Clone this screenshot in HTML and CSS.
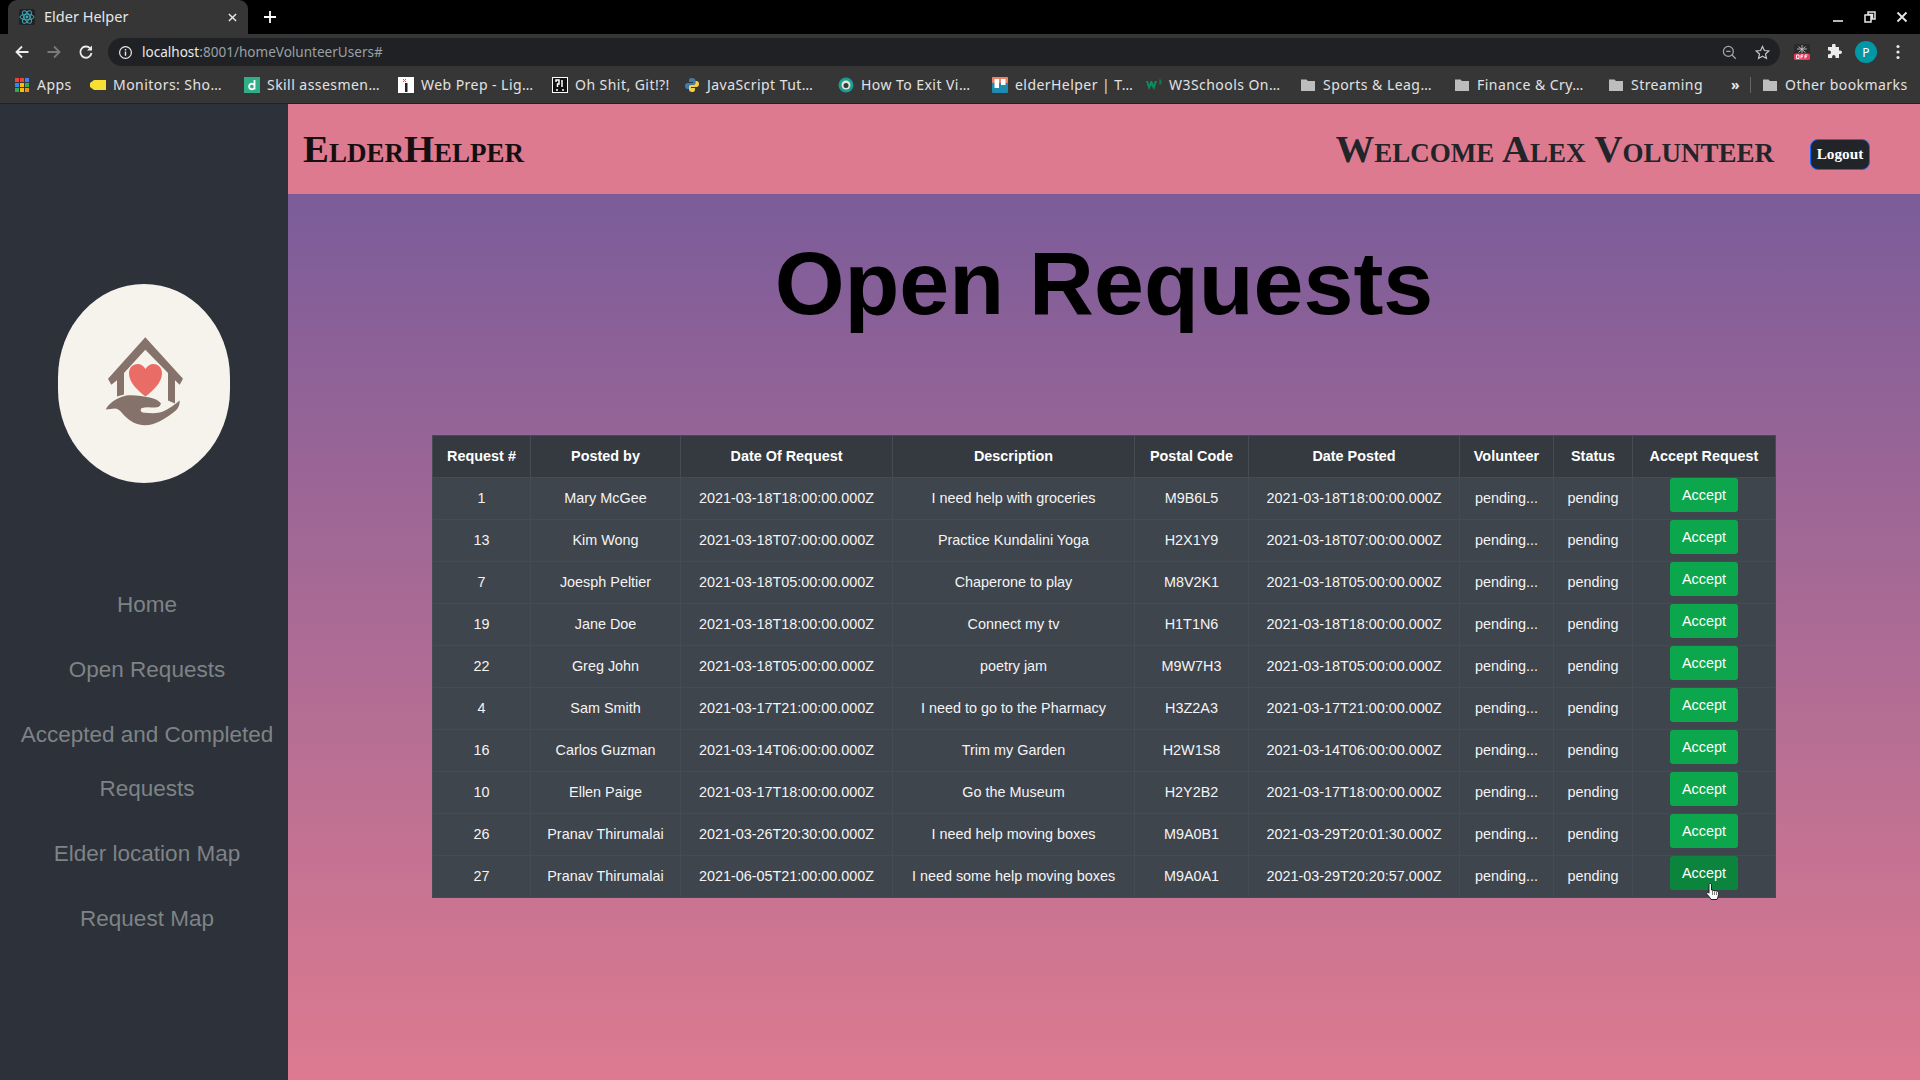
FILE: index.html
```html
<!DOCTYPE html>
<html lang="en">
<head>
<meta charset="utf-8">
<title>Elder Helper</title>
<link rel="stylesheet" href="styles.css">
</head>
<body>
<div class="chrome">
  <div class="tabstrip">
    <div class="tab">
      <svg class="favicon" viewBox="0 0 16 16"><rect width="16" height="16" rx="2" fill="#222"/><g fill="none" stroke="#3fa7b8" stroke-width="1"><ellipse cx="8" cy="8" rx="7" ry="2.8"/><ellipse cx="8" cy="8" rx="7" ry="2.8" transform="rotate(60 8 8)"/><ellipse cx="8" cy="8" rx="7" ry="2.8" transform="rotate(120 8 8)"/></g><circle cx="8" cy="8" r="1.4" fill="#3fa7b8"/></svg>
      <span class="tab-title">Elder Helper</span>
      <svg class="tab-close" viewBox="0 0 10 10"><path d="M1 1l8 8M9 1l-8 8" stroke="#e8e8e8" stroke-width="1.6"/></svg>
    </div>
    <svg class="newtab" viewBox="0 0 12 12"><path d="M6 0v12M0 6h12" stroke="#fff" stroke-width="1.8"/></svg>
    <div class="winctl">
      <svg viewBox="0 0 12 12"><path d="M1 10h10" stroke="#e8e8e8" stroke-width="1.6"/></svg>
      <svg viewBox="0 0 12 12"><path d="M4 1h7v7H8.500V3.500H4zM1 4h6v7H1z" fill="none" stroke="#e8e8e8" stroke-width="1.500"/></svg>
      <svg viewBox="0 0 12 12"><path d="M1.500 1.500l9 9M10.500 1.500l-9 9" stroke="#e8e8e8" stroke-width="1.800"/></svg>
    </div>
  </div>
  <div class="toolbar">
    <svg class="nav-ic" viewBox="0 0 16 16"><path d="M14.500 8H2.500M8 2.500L2.500 8 8 13.500" fill="none" stroke="#ececec" stroke-width="1.800"/></svg>
    <svg class="nav-ic" viewBox="0 0 16 16"><path d="M1.500 8h12M8 2.500L13.500 8 8 13.500" fill="none" stroke="#7a7a7a" stroke-width="1.800"/></svg>
    <svg class="nav-ic" viewBox="0 0 16 16"><path d="M13.500 9a5.600 5.600 0 1 1-1.500-4.800" fill="none" stroke="#ececec" stroke-width="1.800"/><path d="M14 1.500v5h-5z" fill="#ececec"/></svg>
    <div class="omnibox">
      <svg class="info" viewBox="0 0 16 16"><circle cx="8" cy="8" r="6.300" fill="none" stroke="#e8e8e8" stroke-width="1.300"/><path d="M8 7v4.500M8 4.300v1.500" stroke="#e8e8e8" stroke-width="1.500"/></svg>
      <span class="url"><span class="host">localhost</span>:8001/homeVolunteerUsers#</span>
      <svg class="omni-ic zoom-ic" viewBox="0 0 16 16"><circle cx="6.800" cy="6.800" r="5.300" fill="none" stroke="#a8a8a8" stroke-width="1.300"/><path d="M4.500 6.800h4.600M10.700 10.700l4 4" stroke="#a8a8a8" stroke-width="1.300"/></svg>
      <svg class="omni-ic" viewBox="0 0 16 16"><path d="M8 1.500l2 4.400 4.700.5-3.500 3.200 1 4.700L8 11.900l-4.200 2.400 1-4.700L1.300 6.400 6 5.900z" fill="none" stroke="#c4c4c4" stroke-width="1.300"/></svg>
    </div>
    <svg class="ext" viewBox="0 0 16 16"><rect width="16" height="16" rx="2" fill="#2a2a2a"/><g stroke="#cfcfcf" stroke-width=".8"><path d="M8 1v8M3 5h10M4.500 2.500l7 6M11.500 2.500l-7 6"/></g><rect y="9.500" width="16" height="6.500" rx="1.500" fill="#f0395e"/><path d="M2.500 11h2.500v3.500H2.500zM7 14.500V11h2.300M7 12.700h2M11 14.500V11h2.500M11 12.700h2" fill="none" stroke="#fff" stroke-width=".9"/></svg>
    <svg class="puzzle" viewBox="0 0 16 16"><path d="M6 1.500a1.800 1.800 0 0 1 3.600 0V3H13v3.500h1.200a1.800 1.800 0 0 1 0 3.600H13V14H9.500v-1.200a1.700 1.700 0 0 0-3.400 0V14H2v-3.800h1.200a1.800 1.800 0 0 0 0-3.600H2V3h4z" fill="#ececec"/></svg>
    <span class="avatar">P</span>
    <svg class="kebab" viewBox="0 0 4 16"><circle cx="2" cy="2.500" r="1.600" fill="#e8e8e8"/><circle cx="2" cy="8" r="1.600" fill="#e8e8e8"/><circle cx="2" cy="13.500" r="1.600" fill="#e8e8e8"/></svg>
  </div>
  <div class="bookmarks">
    <span class="bm bm-apps">
      <svg class="bm-ic" viewBox="0 0 16 16"><g><rect x="1" y="1" width="4" height="4" fill="#e8453c"/><rect x="6" y="1" width="4" height="4" fill="#e8453c"/><rect x="11" y="1" width="4" height="4" fill="#3b82f6"/><rect x="1" y="6" width="4" height="4" fill="#3b82f6"/><rect x="6" y="6" width="4" height="4" fill="#fbbc05"/><rect x="11" y="6" width="4" height="4" fill="#34a853"/><rect x="1" y="11" width="4" height="4" fill="#34a853"/><rect x="6" y="11" width="4" height="4" fill="#fbbc05"/><rect x="11" y="11" width="4" height="4" fill="#f28b20"/></g></svg>
      <span class="bm-text">Apps</span>
    </span>
    <span class="bm">
      <svg class="bm-ic" viewBox="0 0 16 16"><path d="M0 6l4-3h12v10H4L0 10z" fill="#f7df33"/></svg>
      <span class="bm-text">Monitors: Sho…</span>
    </span>
    <span class="bm">
      <svg class="bm-ic" viewBox="0 0 16 16"><rect width="16" height="16" fill="#2fae87"/><path d="M10.500 3v9.500M10.500 8.500a2.800 2.800 0 1 0 0 2" fill="none" stroke="#fff" stroke-width="1.800"/></svg>
      <span class="bm-text">Skill assesmen…</span>
    </span>
    <span class="bm">
      <svg class="bm-ic" viewBox="0 0 16 16"><rect width="16" height="16" fill="#fff"/><path d="M5 2l3 3M8 2L5 5" stroke="#e05050"/><rect x="7" y="6" width="2.500" height="9" fill="#223"/></svg>
      <span class="bm-text">Web Prep - Lig…</span>
    </span>
    <span class="bm bm-short">
      <svg class="bm-ic" viewBox="0 0 16 16"><rect width="16" height="16" fill="#fff"/><rect x="1" y="1" width="14" height="14" fill="#111"/><path d="M4 5V3h3v4H5.500v3M10 3v7M4 13h2M10 13h2" stroke="#fff" stroke-width="1.500" fill="none"/></svg>
      <span class="bm-text">Oh Shit, Git!?!</span>
    </span>
    <span class="bm">
      <svg class="bm-ic" viewBox="0 0 16 16"><path d="M8 1C5 1 5 2.500 5 4v1h4v1H3.500C2 6 1 7 1 9s1 3 2.500 3H5v-2c0-1.200 1-2 2-2h3c1 0 1.500-.8 1.500-1.500V3.500C11.500 2 10 1 8 1z" fill="#3f7cac"/><path d="M8 15c3 0 3-1.500 3-3v-1H7v-1h5.500C14 10 15 9 15 7s-1-3-2.500-3H11.500v2c0 1.200-1 2-2 2H6.500c-1 0-1.500.8-1.500 1.500v3C5 14 6 15 8 15z" fill="#f5cf47"/></svg>
      <span class="bm-text">JavaScript Tut…</span>
    </span>
    <span class="bm">
      <svg class="bm-ic" viewBox="0 0 16 16"><circle cx="8" cy="8" r="7.500" fill="#1a9c98"/><circle cx="8" cy="8" r="4.500" fill="#e8e6c8"/><circle cx="8" cy="8.500" r="2.500" fill="#2d3a4a"/></svg>
      <span class="bm-text">How To Exit Vi…</span>
    </span>
    <span class="bm">
      <svg class="bm-ic" viewBox="0 0 16 16"><rect width="16" height="16" rx="1" fill="#1f8bb0"/><rect width="16" height="6" rx="1" fill="#e9826a"/><rect x="2.500" y="2" width="4.500" height="9" fill="#fff"/><rect x="9" y="2" width="4.500" height="6" fill="#fff"/></svg>
      <span class="bm-text">elderHelper | T…</span>
    </span>
    <span class="bm">
      <svg class="bm-ic" viewBox="0 0 16 16"><path d="M0 4l3 9 2.200-5 2.800 5 3-9H8.500L8 8 6 4H4.500L3 8 2.200 4z" fill="#0a8f5b"/><path d="M13 3h2M15 3v2h-2M13 5h2v2h-2" fill="none" stroke="#0a8f5b" stroke-width=".7"/></svg>
      <span class="bm-text">W3Schools On…</span>
    </span>
    <span class="bm">
      <svg class="bm-ic" viewBox="0 0 16 16"><path d="M1 2.500h5.500L8 4h7v10H1z" fill="#bdbdbd"/></svg>
      <span class="bm-text">Sports &amp; Leag…</span>
    </span>
    <span class="bm">
      <svg class="bm-ic" viewBox="0 0 16 16"><path d="M1 2.500h5.500L8 4h7v10H1z" fill="#bdbdbd"/></svg>
      <span class="bm-text">Finance &amp; Cry…</span>
    </span>
    <span class="bm bm-stream">
      <svg class="bm-ic" viewBox="0 0 16 16"><path d="M1 2.500h5.500L8 4h7v10H1z" fill="#bdbdbd"/></svg>
      <span class="bm-text">Streaming</span>
    </span>
    <span class="bm-more">»</span>
    <span class="bm-sep"></span>
    <span class="bm bm-other">
      <svg class="bm-ic" viewBox="0 0 16 16"><path d="M1 2.500h5.500L8 4h7v10H1z" fill="#bdbdbd"/></svg>
      <span class="bm-text">Other bookmarks</span>
    </span>
  </div>
</div>

<div class="app">
  <aside class="sidebar">
    <div class="logo">
      <svg class="logo-art" viewBox="0 -1.500 172 198">
        <path d="M87.300 51.700L125 93.300l-3.300 6-4.700-4.500V118l-7-3V87.500L87.300 64.300 66 87.500V109l-7 2V94.800l-5.700 4.500-3.300-6z" fill="#85736b"/>
        <path d="M87.500 111C80 105 71 97 71 88c0-6 4-9.500 8.500-9.500 3.500 0 6.500 2 8 5 1.500-3 4.500-5 8-5 4.500 0 8.500 3.500 8.500 9.500 0 9-9 17-16.500 23z" fill="#e96c66"/>
        <path d="M47.700 124c3-6 11-12 20.600-14 9-1 16 1 23.400 2 5 1 9.300 3 11.300 6-1 3-3 4-6 4-4.500 0-9-1-13.700.7-1.500 2.500 0 4.300 3.400 4.600 6 .4 13.300 1 18.300-1.300 6-2.500 12-7 16.700-11 .3 6-3 10-7.700 13-8 6-17 11.700-27 11.700-8 0-15-4-20-9-4-4-6-7.700-10-7.700z" fill="#85736b"/>
      </svg>
    </div>
    <nav class="side-nav">
      <a class="side-link" href="#">Home</a>
      <a class="side-link" href="#">Open Requests</a>
      <a class="side-link" href="#">Accepted and Completed Requests</a>
      <a class="side-link" href="#">Elder location Map</a>
      <a class="side-link" href="#">Request Map</a>
    </nav>
  </aside>
  <div class="content">
    <header class="topbar">
      <span class="brand">ElderHelper</span>
      <div class="topbar-right">
        <span class="welcome">Welcome Alex Volunteer</span>
        <button class="logout">Logout</button>
      </div>
    </header>
    <main class="main">
      <h1 class="page-title">Open Requests</h1>
      <table class="req-table">
        <colgroup>
          <col class="c1"><col class="c2"><col class="c3"><col class="c4"><col class="c5"><col class="c6"><col class="c7"><col class="c8"><col class="c9">
        </colgroup>
        <thead>
          <tr><th>Request #</th><th>Posted by</th><th>Date Of Request</th><th>Description</th><th>Postal Code</th><th>Date Posted</th><th>Volunteer</th><th>Status</th><th>Accept Request</th></tr>
        </thead>
        <tbody>
          <tr><td>1</td><td>Mary McGee</td><td>2021-03-18T18:00:00.000Z</td><td>I need help with groceries</td><td>M9B6L5</td><td>2021-03-18T18:00:00.000Z</td><td>pending...</td><td>pending</td><td class="act"><button class="accept">Accept</button></td></tr>
          <tr><td>13</td><td>Kim Wong</td><td>2021-03-18T07:00:00.000Z</td><td>Practice Kundalini Yoga</td><td>H2X1Y9</td><td>2021-03-18T07:00:00.000Z</td><td>pending...</td><td>pending</td><td class="act"><button class="accept">Accept</button></td></tr>
          <tr><td>7</td><td>Joesph Peltier</td><td>2021-03-18T05:00:00.000Z</td><td>Chaperone to play</td><td>M8V2K1</td><td>2021-03-18T05:00:00.000Z</td><td>pending...</td><td>pending</td><td class="act"><button class="accept">Accept</button></td></tr>
          <tr><td>19</td><td>Jane Doe</td><td>2021-03-18T18:00:00.000Z</td><td>Connect my tv</td><td>H1T1N6</td><td>2021-03-18T18:00:00.000Z</td><td>pending...</td><td>pending</td><td class="act"><button class="accept">Accept</button></td></tr>
          <tr><td>22</td><td>Greg John</td><td>2021-03-18T05:00:00.000Z</td><td>poetry jam</td><td>M9W7H3</td><td>2021-03-18T05:00:00.000Z</td><td>pending...</td><td>pending</td><td class="act"><button class="accept">Accept</button></td></tr>
          <tr><td>4</td><td>Sam Smith</td><td>2021-03-17T21:00:00.000Z</td><td>I need to go to the Pharmacy</td><td>H3Z2A3</td><td>2021-03-17T21:00:00.000Z</td><td>pending...</td><td>pending</td><td class="act"><button class="accept">Accept</button></td></tr>
          <tr><td>16</td><td>Carlos Guzman</td><td>2021-03-14T06:00:00.000Z</td><td>Trim my Garden</td><td>H2W1S8</td><td>2021-03-14T06:00:00.000Z</td><td>pending...</td><td>pending</td><td class="act"><button class="accept">Accept</button></td></tr>
          <tr><td>10</td><td>Ellen Paige</td><td>2021-03-17T18:00:00.000Z</td><td>Go the Museum</td><td>H2Y2B2</td><td>2021-03-17T18:00:00.000Z</td><td>pending...</td><td>pending</td><td class="act"><button class="accept">Accept</button></td></tr>
          <tr><td>26</td><td>Pranav Thirumalai</td><td>2021-03-26T20:30:00.000Z</td><td>I need help moving boxes</td><td>M9A0B1</td><td>2021-03-29T20:01:30.000Z</td><td>pending...</td><td>pending</td><td class="act"><button class="accept">Accept</button></td></tr>
          <tr><td>27</td><td>Pranav Thirumalai</td><td>2021-06-05T21:00:00.000Z</td><td>I need some help moving boxes</td><td>M9A0A1</td><td>2021-03-29T20:20:57.000Z</td><td>pending...</td><td>pending</td><td class="act"><button class="accept accept-hover">Accept</button></td></tr>
        </tbody>
      </table>
    </main>
  </div>
</div>
<svg class="cursor" viewBox="0 0 16 20"><path d="M5 1.500c1 0 1.500.6 1.500 1.500v5l5 1c1.500.3 2 1 2 2.200 0 2-.5 4-1.500 6.300H6c-1-2-2.500-3.500-4-5.300-.6-.8-.3-1.700.5-1.800.7-.1 1.300.4 1.500.8V3c0-.9.300-1.500 1-1.500z" fill="#fff" stroke="#222" stroke-width="1"/><path d="M7.500 9v4M9.500 9.500v3.500M11.500 10v3" stroke="#444" stroke-width=".7"/></svg>
</body>
</html>
```
FILE: styles.css
```css
* { box-sizing: border-box; }
html, body { margin: 0; height: 100%; overflow: hidden; }
body { display: flex; flex-direction: column; font-family: "Liberation Sans", Arial, sans-serif; background: #2c313a; }

/* browser chrome */
.chrome { flex: 0 0 104px; display: flex; flex-direction: column; font-family: "Noto Sans", sans-serif; color: #e8e8e8; }
.tabstrip { height: 34px; background: #000; display: flex; align-items: flex-end; padding-left: 8px; position: relative; }
.tab { width: 240px; height: 34px; background: #363636; border-radius: 9px 9px 0 0; display: flex; align-items: center; padding: 0 11px 0 11px; }
.favicon { width: 16px; height: 16px; flex: none; }
.tab-title { font-size: 14.500px; margin-left: 9px; margin-top: -2px; flex: 1; color: #e6e6e6; }
.tab-close { width: 9px; height: 9px; flex: none; }
.newtab { width: 12px; height: 12px; margin: 0 0 11px 16px; flex: none; }
.winctl { margin-left: auto; height: 34px; display: flex; align-items: center; gap: 20px; padding-right: 12px; }
.winctl svg { width: 12px; height: 12px; }
.toolbar { height: 32px; background: #363636; display: flex; align-items: center; padding: 4px 0 0 14px; }
.nav-ic { width: 16px; height: 16px; margin-right: 16px; flex: none; }
.nav-ic:nth-child(3) { margin-right: 14px; }
.omnibox { width: 1672px; height: 28px; background: #202124; border-radius: 14px; display: flex; align-items: center; padding: 0 10px 0 10px; }
.info { width: 15px; height: 15px; margin-right: 9px; flex: none; }
.url { font-size: 13.550px; color: #9aa0a6; flex: 1; }
.host { color: #e8eaed; }
.omni-ic { width: 15px; height: 15px; flex: none; }
.zoom-ic { margin-right: 18px; }
.ext { width: 16px; height: 16px; margin-left: 14px; flex: none; }
.puzzle { width: 16px; height: 16px; margin-left: 16px; flex: none; }
.avatar { width: 22px; height: 22px; margin-left: 13px; border-radius: 50%; background: #0097a7; color: #fff; font-size: 12px; display: flex; align-items: center; justify-content: center; flex: none; }
.kebab { width: 4px; height: 16px; margin-left: 19px; flex: none; }
.bookmarks { height: 38px; background: #363636; border-bottom: 1px solid #222; display: flex; align-items: center; padding-left: 14px; font-size: 14px; letter-spacing: .45px; }
.bm { width: 154px; display: flex; align-items: center; flex: none; }
.bm-apps { width: 76px; }
.bm-short { width: 132px; }
.bm-stream { width: 123px; }
.bm-other { width: auto; }
.bm-ic { width: 16px; height: 16px; flex: none; margin-right: 7px; }
.bm-text { color: #e2e2e2; white-space: nowrap; }
.bm-more { width: 14px; font-weight: 700; color: #e8e8e8; flex: none; }
.bm-sep { width: 1px; height: 16px; background: #666; margin: 0 11px 0 5px; flex: none; }

/* app */
.app { flex: 1; display: flex; min-height: 0; }
.sidebar { width: 288px; flex: none; background: #2c313a; display: flex; flex-direction: column; align-items: center; padding-top: 180px; }
.logo { width: 172px; height: 199px; background: #f6f3ec; border-radius: 50% / 47%; flex: none; }
.logo-art { display: block; width: 172px; height: 198px; }
.side-nav { margin-top: 95px; display: flex; flex-direction: column; gap: 11px; width: 288px; padding: 0 0 0 6px; align-items: center; }
.side-link { font-size: 22.500px; line-height: 54px; color: #7e8386; text-decoration: none; text-align: center; }
.content { flex: 1; display: flex; flex-direction: column; min-width: 0; }
.topbar { height: 90px; flex: none; background: #dd7a90; display: flex; align-items: center; justify-content: space-between; padding: 0 50px 0 15px; font-family: "Liberation Serif", serif; }
.brand { font-size: 38.800px; font-weight: 700; font-variant: small-caps; color: #150f12; margin-top: -2px; }
.topbar-right { display: flex; align-items: center; gap: 36px; }
.welcome { font-size: 38.800px; font-weight: 700; font-variant: small-caps; color: #212529; margin-top: -2px; }
.logout { width: 60px; height: 31px; padding: 0; background: #212529; color: #fff; border: 1px solid #0d6efd; border-radius: 8px; font-family: "Liberation Serif", serif; font-weight: 700; font-size: 15.300px; margin-top: 10px; }
.main { flex: 1; background: linear-gradient(#7b5c99, #dd7a90); display: flex; flex-direction: column; align-items: center; min-height: 0; }
.page-title { margin: 35px 0 0; height: 206px; font-size: 89.800px; line-height: 108px; font-weight: 700; color: #000; text-align: center; }

/* table */
.req-table { width: 1343px; table-layout: fixed; border-collapse: collapse; font-size: 14.400px; color: #fff; }
.c1 { width: 98px; } .c2 { width: 150px; } .c3 { width: 212px; } .c4 { width: 242px; } .c5 { width: 114px; } .c6 { width: 211px; } .c7 { width: 94px; } .c8 { width: 79px; } .c9 { width: 143px; }
.req-table th, .req-table td { border: 1px solid #454c55; text-align: center; vertical-align: middle; padding: 0; height: 42px; }
.req-table th { background: #343a40; font-weight: 700; padding-bottom: 2px; }
.req-table td { background: #3f454d; color: #f4f4f4; padding-bottom: 2px; }
.req-table td.act { vertical-align: top; padding: 0; }
.req-table tr + tr td.act { border-top: 1px solid #aaa; }
.accept { display: block; width: 68px; height: 34px; margin: 0 auto; padding: 0; background: #0ca64d; color: #fff; border: 0; border-radius: 3px; font-family: "Liberation Sans", Arial, sans-serif; font-size: 14.400px; }
.accept-hover { background: #0b853e; }
.cursor { position: absolute; left: 1705px; top: 882px; width: 16px; height: 20px; }
```
